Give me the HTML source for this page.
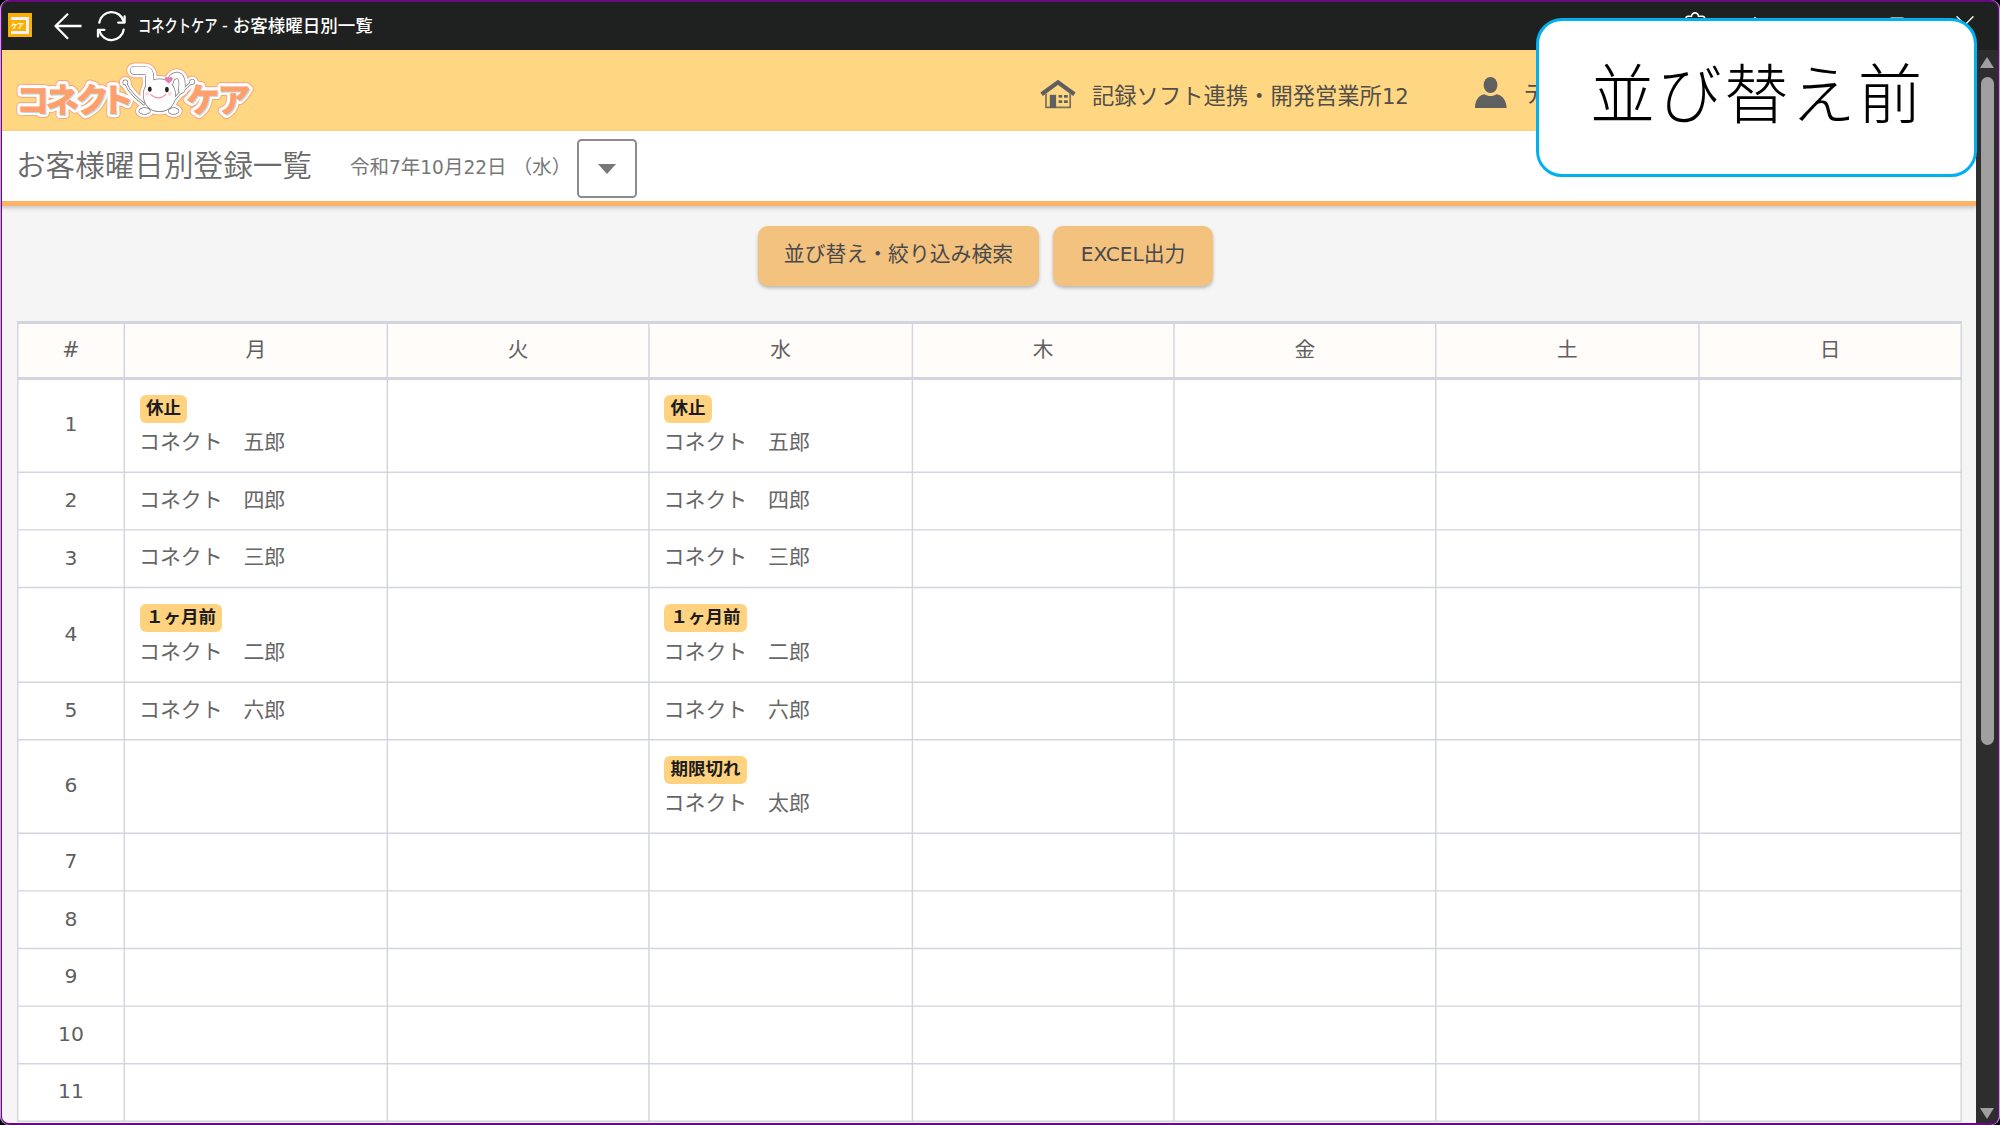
<!DOCTYPE html>
<html lang="ja">
<head>
<meta charset="utf-8">
<title>コネクトケア - お客様曜日別一覧</title>
<style>
*{box-sizing:border-box;margin:0;padding:0}
html,body{width:2000px;height:1125px;overflow:hidden;background:#000}
body{font-family:"DejaVu Sans","Liberation Sans","Noto Sans CJK JP",sans-serif;color:#5f5f5f;position:relative}
#win{position:absolute;left:0;top:0;width:2000px;height:1125px;background:#f5f5f5;border-radius:9px;overflow:hidden}
#frame{position:absolute;left:0;top:0;width:2000px;height:1125px;border:2px solid #6a0a82;border-radius:9px;pointer-events:none;z-index:50}
#frame2{position:absolute;left:0;top:0;width:2000px;height:1125px;border-left:1px solid #c9a0d6;border-right:1px solid #c9a0d6;border-radius:9px;pointer-events:none;z-index:51}
#titlebar{position:absolute;left:0;top:0;width:2000px;height:50px;background:#1f2120;color:#fff}
#titlebar .ttl{position:absolute;left:137.5px;top:13.7px;font-family:"Liberation Sans","Noto Sans CJK JP",sans-serif;font-size:17.5px;line-height:24px;white-space:nowrap;color:#fff;font-weight:500}
#titlebar .kana{display:inline-block;transform:scaleX(.758);transform-origin:0 50%;margin-right:-25.4px}
#appicon{position:absolute;left:8px;top:13px;width:24px;height:24px;background:#fbb000}
#appicon i{position:absolute;left:3px;top:3.5px;width:17.5px;height:17px;display:block;border:3px solid #f4f0ff;border-left:none}
#appicon b{position:absolute;left:3px;top:8px;font-family:"Noto Sans CJK JP",sans-serif;font-size:7px;line-height:8px;color:#fff;font-weight:bold;letter-spacing:-1px}
#hdr{position:absolute;left:0;top:50px;width:1976px;height:81px;background:#ffd783}
#sub{position:absolute;left:0;top:131px;width:1976px;height:75px;background:#fff;border-bottom:5px solid #ffb366;box-shadow:0 1.5px 4px rgba(60,60,70,.26)}
#sub h1{position:absolute;left:16px;top:12.5px;font-family:"Liberation Sans","Noto Sans CJK JP",sans-serif;font-size:29.6px;line-height:44px;font-weight:350;color:#6a6a6a;white-space:nowrap}
#sub .date{position:absolute;left:350px;top:22.3px;font-size:19.5px;line-height:30px;color:#777;white-space:nowrap}
#dd{position:absolute;left:577px;top:8px;width:60px;height:59px;border:2px solid #8c8c8c;border-radius:4.5px;background:#fff}
#dd:after{content:"";position:absolute;left:19.3px;top:22.6px;border-left:9px solid transparent;border-right:9px solid transparent;border-top:10.4px solid #777}
.btn{position:absolute;top:226px;height:59.5px;background:#f4c27f;border-radius:10px;box-shadow:0 2px 3.5px rgba(50,50,60,.32);font-size:20.85px;line-height:57px;text-align:center;color:#48494d;white-space:nowrap}
#b1{left:758px;width:281px}
#b2{left:1053px;width:160px}
#sb{position:absolute;left:1976px;top:50px;width:22px;height:1073px;background:#2d2d2d}
#sb .thumb{position:absolute;left:4.5px;top:26.8px;width:13.5px;height:668px;border-radius:6.75px;background:#9f9f9f}
#sb .up{position:absolute;left:4px;top:6.5px;width:0;height:0;border-left:7px solid transparent;border-right:7px solid transparent;border-bottom:11.5px solid #9f9f9f}
#sb .dn{position:absolute;left:4px;top:1057.5px;width:0;height:0;border-left:7px solid transparent;border-right:7px solid transparent;border-top:11.5px solid #9f9f9f}
#grid{position:absolute;left:0;top:0}
.th{position:absolute;width:120px;text-align:center;font-size:20.7px;line-height:30px;color:#5f5f5f;white-space:nowrap}
.num{position:absolute;width:80px;text-align:center;font-size:20.3px;line-height:30px;color:#5f5f5f;white-space:nowrap}
.nm{position:absolute;font-size:20.9px;line-height:30px;color:#666;white-space:nowrap}
.bd{position:absolute;height:28px;line-height:27px;padding:0 6.2px;border-radius:6px;background:#ffd27f;color:#1c1c1c;font-weight:bold;font-size:17.5px;white-space:nowrap;font-family:"Liberation Sans","Noto Sans CJK JP",sans-serif}
#callout{position:absolute;left:1536px;top:18px;width:441px;height:159.3px;border:3px solid #00b0f0;border-radius:26px;background:#fff;z-index:40}
#callout span{position:absolute;left:1px;width:100%;top:24.5px;letter-spacing:2.4px;color:#000;font-family:"Liberation Sans","Noto Sans CJK JP",sans-serif;font-weight:300;font-size:64.5px;line-height:100px;text-align:center;white-space:nowrap;display:block}
.hinfo{position:absolute;top:28px;font-size:22.3px;line-height:36px;color:#524f4a;white-space:nowrap}
svg{display:block}
.d{font-size:.95em}
</style>
</head>
<body>
<div id="win">
  <div id="titlebar">
    <div id="appicon"><i></i><b>ケア</b></div>
    <svg style="position:absolute;left:0;top:0" width="140" height="50" viewBox="0 0 140 50" fill="none" stroke="#fff" stroke-width="2.3" stroke-linecap="round" stroke-linejoin="round">
      <path d="M55.5 26 H81.5 M68 13.8 L55.5 26 L68 38.8" stroke-linecap="butt"/>
      <path d="M99.3 22.6 A12.4 12.4 0 0 1 123.6 21.5" />
      <path d="M123.7 29.6 A12.4 12.4 0 0 1 99.4 30.7" />
      <path d="M124.6 16.3 V22.6 H118.2 M98 36.6 V29.8 H104.4"/>
    </svg>
    <svg style="position:absolute;left:1660px;top:0" width="340" height="50" viewBox="1660 0 340 50" fill="none" stroke="#fff" stroke-width="1.6" stroke-linecap="round" stroke-linejoin="round">
      <path d="M1686 36 V18.5 Q1686 16.3 1688.2 16.3 H1691.6 A3.4 3.4 0 1 1 1698.4 16.3 H1702.4 Q1704.6 16.3 1704.6 18.5 V36 Z"/>
      <circle cx="1755" cy="18.6" r="1.5" fill="#fff" stroke="none"/><circle cx="1755" cy="26" r="1.5" fill="#fff" stroke="none"/><circle cx="1755" cy="33.4" r="1.5" fill="#fff" stroke="none"/>
      <path d="M1826 26 H1842" stroke-width="1.3"/>
      <rect x="1889.5" y="17.8" width="15" height="15" rx="2.5" stroke-width="1.2" stroke="#cfcfcf"/>
      <path d="M1957 16.8 L1973 33 M1973 16.8 L1957 33" stroke-width="1.4"/>
    </svg>
    <div class="ttl"><span class="kana">コネクトケア</span>&nbsp;- お客様曜日別一覧</div>
  </div>
  <div id="hdr">
    <svg id="logo" style="position:absolute;left:0;top:-50px" width="280" height="135" viewBox="0 0 280 135"><g font-family="'Noto Sans CJK JP','Liberation Sans',sans-serif" font-weight="700" font-size="33" stroke-linejoin="round"><text x="16.2 45.9 75.8 100.8" y="112.4" fill="#f7a57c" stroke="#f7a57c" stroke-width="9.4">コネクト</text><text x="186.6 217.6" y="112.4" fill="#f7a57c" stroke="#f7a57c" stroke-width="9.4">ケア</text></g><path d="M149.6 85 V76 C149.6 72.2 147.5 70.3 143.5 70.3 H134.2" fill="none" stroke="#f7a57c" stroke-width="15.8" stroke-linecap="round" stroke-linejoin="round"/><path d="M170.3 82 C171.5 74.5 180.5 72.5 181.8 80.5 C182.4 84.5 182.2 87.5 181.6 90" fill="none" stroke="#f7a57c" stroke-width="14.0" stroke-linecap="round" stroke-linejoin="round"/><path d="M125.4 82.8 C127.5 88 131 92.5 134 95.5 C137 98.5 140 101 144 104" fill="none" stroke="#f7a57c" stroke-width="9.9" stroke-linecap="round" stroke-linejoin="round"/><path d="M192 82 C188.5 85.5 184 89 180.5 92.5 C177 96 174.5 99 171.5 103" fill="none" stroke="#f7a57c" stroke-width="9.9" stroke-linecap="round" stroke-linejoin="round"/><circle cx="125.3" cy="82.4" r="2.2" fill="#f7a57c" stroke="#f7a57c" stroke-width="8.4" stroke-linecap="round" stroke-linejoin="round"/><circle cx="192.2" cy="81.8" r="2.2" fill="#f7a57c" stroke="#f7a57c" stroke-width="8.4" stroke-linecap="round" stroke-linejoin="round"/><path d="M159.4 79.2 C169 79.2 175.2 86 175.2 94.5 C175.2 104 169.5 111.2 159.4 111.2 C149.3 111.2 143.6 104 143.6 94.5 C143.6 86 149.8 79.2 159.4 79.2 Z" fill="#f7a57c" stroke="#f7a57c" stroke-width="8.4" stroke-linecap="round" stroke-linejoin="round"/><ellipse cx="144.6" cy="111" rx="5.4" ry="3" fill="#f7a57c" stroke="#f7a57c" stroke-width="8.4" stroke-linecap="round" stroke-linejoin="round"/><ellipse cx="173.6" cy="111" rx="5" ry="3" fill="#f7a57c" stroke="#f7a57c" stroke-width="8.4" stroke-linecap="round" stroke-linejoin="round"/><g font-family="'Noto Sans CJK JP','Liberation Sans',sans-serif" font-weight="700" font-size="33" stroke-linejoin="round"><text x="16.2 45.9 75.8 100.8" y="112.4" fill="#fff" stroke="#fff" stroke-width="7.4">コネクト</text><text x="186.6 217.6" y="112.4" fill="#fff" stroke="#fff" stroke-width="7.4">ケア</text></g><path d="M149.6 85 V76 C149.6 72.2 147.5 70.3 143.5 70.3 H134.2" fill="none" stroke="#fff" stroke-width="13.8" stroke-linecap="round" stroke-linejoin="round"/><path d="M170.3 82 C171.5 74.5 180.5 72.5 181.8 80.5 C182.4 84.5 182.2 87.5 181.6 90" fill="none" stroke="#fff" stroke-width="12.0" stroke-linecap="round" stroke-linejoin="round"/><path d="M125.4 82.8 C127.5 88 131 92.5 134 95.5 C137 98.5 140 101 144 104" fill="none" stroke="#fff" stroke-width="7.9" stroke-linecap="round" stroke-linejoin="round"/><path d="M192 82 C188.5 85.5 184 89 180.5 92.5 C177 96 174.5 99 171.5 103" fill="none" stroke="#fff" stroke-width="7.9" stroke-linecap="round" stroke-linejoin="round"/><circle cx="125.3" cy="82.4" r="2.2" fill="#fff" stroke="#fff" stroke-width="6.4" stroke-linecap="round" stroke-linejoin="round"/><circle cx="192.2" cy="81.8" r="2.2" fill="#fff" stroke="#fff" stroke-width="6.4" stroke-linecap="round" stroke-linejoin="round"/><path d="M159.4 79.2 C169 79.2 175.2 86 175.2 94.5 C175.2 104 169.5 111.2 159.4 111.2 C149.3 111.2 143.6 104 143.6 94.5 C143.6 86 149.8 79.2 159.4 79.2 Z" fill="#fff" stroke="#fff" stroke-width="6.4" stroke-linecap="round" stroke-linejoin="round"/><ellipse cx="144.6" cy="111" rx="5.4" ry="3" fill="#fff" stroke="#fff" stroke-width="6.4" stroke-linecap="round" stroke-linejoin="round"/><ellipse cx="173.6" cy="111" rx="5" ry="3" fill="#fff" stroke="#fff" stroke-width="6.4" stroke-linecap="round" stroke-linejoin="round"/><path d="M149.6 85 V76 C149.6 72.2 147.5 70.3 143.5 70.3 H134.2" fill="none" stroke="#7a7a7a" stroke-width="8.8" stroke-linecap="round" stroke-linejoin="round"/><path d="M170.3 82 C171.5 74.5 180.5 72.5 181.8 80.5 C182.4 84.5 182.2 87.5 181.6 90" fill="none" stroke="#7a7a7a" stroke-width="7.0" stroke-linecap="round" stroke-linejoin="round"/><path d="M125.4 82.8 C127.5 88 131 92.5 134 95.5 C137 98.5 140 101 144 104" fill="none" stroke="#7a7a7a" stroke-width="2.9" stroke-linecap="round" stroke-linejoin="round"/><path d="M192 82 C188.5 85.5 184 89 180.5 92.5 C177 96 174.5 99 171.5 103" fill="none" stroke="#7a7a7a" stroke-width="2.9" stroke-linecap="round" stroke-linejoin="round"/><circle cx="125.3" cy="82.4" r="2.2" fill="#7a7a7a" stroke="#7a7a7a" stroke-width="1.4" stroke-linecap="round" stroke-linejoin="round"/><circle cx="192.2" cy="81.8" r="2.2" fill="#7a7a7a" stroke="#7a7a7a" stroke-width="1.4" stroke-linecap="round" stroke-linejoin="round"/><path d="M159.4 79.2 C169 79.2 175.2 86 175.2 94.5 C175.2 104 169.5 111.2 159.4 111.2 C149.3 111.2 143.6 104 143.6 94.5 C143.6 86 149.8 79.2 159.4 79.2 Z" fill="#7a7a7a" stroke="#7a7a7a" stroke-width="1.4" stroke-linecap="round" stroke-linejoin="round"/><ellipse cx="144.6" cy="111" rx="5.4" ry="3" fill="#7a7a7a" stroke="#7a7a7a" stroke-width="1.4" stroke-linecap="round" stroke-linejoin="round"/><ellipse cx="173.6" cy="111" rx="5" ry="3" fill="#7a7a7a" stroke="#7a7a7a" stroke-width="1.4" stroke-linecap="round" stroke-linejoin="round"/><path d="M149.6 85 V76 C149.6 72.2 147.5 70.3 143.5 70.3 H134.2" fill="none" stroke="#fff" stroke-width="7.4" stroke-linecap="round" stroke-linejoin="round"/><path d="M170.3 82 C171.5 74.5 180.5 72.5 181.8 80.5 C182.4 84.5 182.2 87.5 181.6 90" fill="none" stroke="#fff" stroke-width="5.6" stroke-linecap="round" stroke-linejoin="round"/><path d="M125.4 82.8 C127.5 88 131 92.5 134 95.5 C137 98.5 140 101 144 104" fill="none" stroke="#fff" stroke-width="1.5" stroke-linecap="round" stroke-linejoin="round"/><path d="M192 82 C188.5 85.5 184 89 180.5 92.5 C177 96 174.5 99 171.5 103" fill="none" stroke="#fff" stroke-width="1.5" stroke-linecap="round" stroke-linejoin="round"/><circle cx="125.3" cy="82.4" r="2.2" fill="#fff" stroke="#fff" stroke-width="0" stroke-linecap="round" stroke-linejoin="round"/><circle cx="192.2" cy="81.8" r="2.2" fill="#fff" stroke="#fff" stroke-width="0" stroke-linecap="round" stroke-linejoin="round"/><path d="M159.4 79.2 C169 79.2 175.2 86 175.2 94.5 C175.2 104 169.5 111.2 159.4 111.2 C149.3 111.2 143.6 104 143.6 94.5 C143.6 86 149.8 79.2 159.4 79.2 Z" fill="#fff" stroke="#fff" stroke-width="0" stroke-linecap="round" stroke-linejoin="round"/><ellipse cx="144.6" cy="111" rx="5.4" ry="3" fill="#fff" stroke="#fff" stroke-width="0" stroke-linecap="round" stroke-linejoin="round"/><ellipse cx="173.6" cy="111" rx="5" ry="3" fill="#fff" stroke="#fff" stroke-width="0" stroke-linecap="round" stroke-linejoin="round"/><ellipse cx="149.8" cy="89.2" rx="1.9" ry="2.7" fill="#222"/><ellipse cx="166.9" cy="89.5" rx="1.9" ry="2.7" fill="#222"/><circle cx="147" cy="93.8" r="2" fill="#ffd9dc"/><circle cx="169.8" cy="93.8" r="2" fill="#ffd9dc"/><path d="M150.8 94.6 Q158.2 101 165.8 94.6" fill="none" stroke="#f5859a" stroke-width="1.2" stroke-linecap="round"/><path d="M168.7 83.4 C166.5 81.6 164.6 80 164.8 78.4 C165 76.6 167.6 76.3 168.7 78.3 C169.8 76.3 172.5 76.6 172.7 78.4 C172.9 80 170.9 81.6 168.7 83.4 Z" fill="#e87ab4"/><g font-family="'Noto Sans CJK JP','Liberation Sans',sans-serif" font-weight="700" font-size="33"><text x="16.2 45.9 75.8 100.8" y="112.4" fill="#b5e0dc" stroke="#b5e0dc" stroke-width="1.1" stroke-linejoin="round" transform="translate(0.7 0.7)">コネクト</text><text x="186.6 217.6" y="112.4" fill="#b5e0dc" stroke="#b5e0dc" stroke-width="1.1" stroke-linejoin="round" transform="translate(0.7 0.7)">ケア</text><text x="16.2 45.9 75.8 100.8" y="112.4" fill="#ff9f6e" stroke="#ff9f6e" stroke-width="1.1" stroke-linejoin="round">コネクト</text><text x="186.6 217.6" y="112.4" fill="#ff9f6e" stroke="#ff9f6e" stroke-width="1.1" stroke-linejoin="round">ケア</text></g></svg>
    <svg style="position:absolute;left:1030px;top:20px" width="60" height="50" viewBox="1030 70 60 50">
  <path d="M1041.6 94.2 L1058 82.3 L1074.4 94.2" fill="none" stroke="#5f5f5f" stroke-width="4.2" stroke-linejoin="miter"/>
  <path d="M1046 93.5 V107.4 H1070.2 V93.5" fill="none" stroke="#7a705c" stroke-width="1.7"/>
  <rect x="1049.8" y="94.8" width="6.3" height="13.2" fill="#5f5f5f"/>
  <rect x="1058.6" y="95" width="3.6" height="2.7" fill="#5f5f5f"/><rect x="1064" y="95" width="3.8" height="2.7" fill="#5f5f5f"/>
  <rect x="1058.6" y="100.3" width="3.6" height="2.7" fill="#5f5f5f"/><rect x="1064" y="100.3" width="3.8" height="2.7" fill="#5f5f5f"/>
</svg>
<svg style="position:absolute;left:1470px;top:20px" width="45" height="50" viewBox="1470 70 45 50">
  <ellipse cx="1490.5" cy="85" rx="6.9" ry="8.1" fill="#606060"/>
  <path d="M1475 108 C1475 100.5 1478.5 95.3 1484.4 94.2 C1488 96.6 1493 96.6 1496.6 94.2 C1502.5 95.3 1506.6 100.5 1506.6 108 Z" fill="#606060"/>
</svg>

    <div class="hinfo" style="left:1092px">記録ソフト連携・開発営業所<span class="d">12</span></div>
    <div class="hinfo" style="left:1523.5px;top:25.8px">テスト</div>
  </div>
  <div id="sub">
    <h1>お客様曜日別登録一覧</h1>
    <div class="date">令和<span class="d">7</span>年<span class="d">10</span>月<span class="d">22</span>日 （水）</div>
    <div id="dd"></div>
  </div>
  <div class="btn" id="b1">並び替え・絞り込み検索</div>
  <div class="btn" id="b2"><span class="d" style="font-size:.965em">EXCEL</span>出力</div>
<svg id="grid" width="2000" height="1125" viewBox="0 0 2000 1125"><rect x="17.8" y="322.5" width="1943.3" height="56" fill="#fffcfa"/><rect x="17.8" y="378.5" width="1943.3" height="742.8" fill="#fff"/><line x1="17.8" y1="321" x2="17.8" y2="1122" stroke="#d2d5dd" stroke-width="1.44"/><line x1="124.3" y1="321" x2="124.3" y2="1122" stroke="#d2d5dd" stroke-width="1.44"/><line x1="387.3" y1="321" x2="387.3" y2="1122" stroke="#d2d5dd" stroke-width="1.44"/><line x1="648.9" y1="321" x2="648.9" y2="1122" stroke="#d2d5dd" stroke-width="1.44"/><line x1="912.4" y1="321" x2="912.4" y2="1122" stroke="#d2d5dd" stroke-width="1.44"/><line x1="1174.0" y1="321" x2="1174.0" y2="1122" stroke="#d2d5dd" stroke-width="1.44"/><line x1="1435.8" y1="321" x2="1435.8" y2="1122" stroke="#d2d5dd" stroke-width="1.44"/><line x1="1699.0" y1="321" x2="1699.0" y2="1122" stroke="#d2d5dd" stroke-width="1.44"/><line x1="1961.2" y1="321" x2="1961.2" y2="1122" stroke="#d2d5dd" stroke-width="1.44"/><line x1="17.1" y1="322.5" x2="1961.8" y2="322.5" stroke="#d2d5dd" stroke-width="2.9"/><line x1="17.1" y1="378.5" x2="1961.8" y2="378.5" stroke="#d2d5dd" stroke-width="2.9"/><line x1="17.1" y1="472.3" x2="1961.8" y2="472.3" stroke="#d2d5dd" stroke-width="1.44"/><line x1="17.1" y1="529.9" x2="1961.8" y2="529.9" stroke="#d2d5dd" stroke-width="1.44"/><line x1="17.1" y1="587.5" x2="1961.8" y2="587.5" stroke="#d2d5dd" stroke-width="1.44"/><line x1="17.1" y1="682.2" x2="1961.8" y2="682.2" stroke="#d2d5dd" stroke-width="1.44"/><line x1="17.1" y1="739.8" x2="1961.8" y2="739.8" stroke="#d2d5dd" stroke-width="1.44"/><line x1="17.1" y1="833.3" x2="1961.8" y2="833.3" stroke="#d2d5dd" stroke-width="1.44"/><line x1="17.1" y1="890.9" x2="1961.8" y2="890.9" stroke="#d2d5dd" stroke-width="1.44"/><line x1="17.1" y1="948.5" x2="1961.8" y2="948.5" stroke="#d2d5dd" stroke-width="1.44"/><line x1="17.1" y1="1006.1" x2="1961.8" y2="1006.1" stroke="#d2d5dd" stroke-width="1.44"/><line x1="17.1" y1="1063.7" x2="1961.8" y2="1063.7" stroke="#d2d5dd" stroke-width="1.44"/><line x1="17.1" y1="1121.3" x2="1961.8" y2="1121.3" stroke="#d2d5dd" stroke-width="1.44"/></svg>
<div class="th lat" style="left:11.0px;top:334.8px">#</div>
<div class="th" style="left:195.8px;top:334.8px">月</div>
<div class="th" style="left:458.1px;top:334.8px">火</div>
<div class="th" style="left:720.6px;top:334.8px">水</div>
<div class="th" style="left:983.2px;top:334.8px">木</div>
<div class="th" style="left:1244.9px;top:334.8px">金</div>
<div class="th" style="left:1507.4px;top:334.8px">土</div>
<div class="th" style="left:1770.1px;top:334.8px">日</div>
<div class="num" style="left:31.0px;top:409.2px">1</div>
<div class="bd" style="left:139.8px;top:394.5px">休止</div>
<div class="nm" style="left:139.0px;top:426.7px">コネクト　五郎</div>
<div class="bd" style="left:664.4px;top:394.5px">休止</div>
<div class="nm" style="left:663.6px;top:426.7px">コネクト　五郎</div>
<div class="num" style="left:31.0px;top:484.9px">2</div>
<div class="nm" style="left:139.0px;top:484.6px">コネクト　四郎</div>
<div class="nm" style="left:663.6px;top:484.6px">コネクト　四郎</div>
<div class="num" style="left:31.0px;top:542.5px">3</div>
<div class="nm" style="left:139.0px;top:542.2px">コネクト　三郎</div>
<div class="nm" style="left:663.6px;top:542.2px">コネクト　三郎</div>
<div class="num" style="left:31.0px;top:618.6px">4</div>
<div class="bd" style="left:139.8px;top:603.5px">１ヶ月前</div>
<div class="nm" style="left:139.0px;top:637.1px">コネクト　二郎</div>
<div class="bd" style="left:664.4px;top:603.5px">１ヶ月前</div>
<div class="nm" style="left:663.6px;top:637.1px">コネクト　二郎</div>
<div class="num" style="left:31.0px;top:694.8px">5</div>
<div class="nm" style="left:139.0px;top:694.5px">コネクト　六郎</div>
<div class="nm" style="left:663.6px;top:694.5px">コネクト　六郎</div>
<div class="num" style="left:31.0px;top:770.3px">6</div>
<div class="bd" style="left:664.4px;top:755.8px">期限切れ</div>
<div class="nm" style="left:663.6px;top:788.0px">コネクト　太郎</div>
<div class="num" style="left:31.0px;top:845.9px">7</div>
<div class="num" style="left:31.0px;top:903.5px">8</div>
<div class="num" style="left:31.0px;top:961.1px">9</div>
<div class="num" style="left:31.0px;top:1018.7px">10</div>
<div class="num" style="left:31.0px;top:1076.3px">11</div>
  <div id="sb"><div class="up"></div><div class="thumb"></div><div class="dn"></div></div>
</div>
<div id="frame"></div><div id="frame2"></div>
<div id="callout"><span>並び替え前</span></div>
</body>
</html>
